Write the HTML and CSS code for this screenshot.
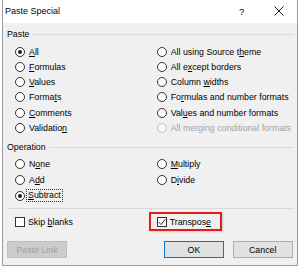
FILE: index.html
```html
<!DOCTYPE html>
<html>
<head>
<meta charset="utf-8">
<link rel="stylesheet" href="styles.css">
</head>
<body>
<div class="dialog">
  <div class="titlebar">
    <span class="title">Paste Special</span>
    <span class="help">?</span>
    <svg class="close" width="10" height="10" viewBox="0 0 10 10"><path d="M0.5 0.5L9.5 9.5M9.5 0.5L0.5 9.5" stroke="#1a1a1a" stroke-width="1" fill="none"/></svg>
  </div>
  <div class="content">
    <div class="group-head"><span>Paste</span><i class="rule"></i></div>
    <div class="grid paste">
      <label class="opt"><span class="radio on"></span><span><u>A</u>ll</span></label>
      <label class="opt"><span class="radio"></span><span>All using Source t<u>h</u>eme</span></label>
      <label class="opt"><span class="radio"></span><span><u>F</u>ormulas</span></label>
      <label class="opt"><span class="radio"></span><span>All e<u>x</u>cept borders</span></label>
      <label class="opt"><span class="radio"></span><span><u>V</u>alues</span></label>
      <label class="opt"><span class="radio"></span><span>Column <u>w</u>idths</span></label>
      <label class="opt"><span class="radio"></span><span>Forma<u>t</u>s</span></label>
      <label class="opt"><span class="radio"></span><span>Fo<u>r</u>mulas and number formats</span></label>
      <label class="opt"><span class="radio"></span><span><u>C</u>omments</span></label>
      <label class="opt"><span class="radio"></span><span>Val<u>u</u>es and number formats</span></label>
      <label class="opt"><span class="radio"></span><span>Validatio<u>n</u></span></label>
      <label class="opt disabled"><span class="radio"></span><span>All merging conditional formats</span></label>
    </div>
    <div class="group-head op"><span>Operation</span><i class="rule"></i></div>
    <div class="grid ops">
      <label class="opt"><span class="radio"></span><span>N<u>o</u>ne</span></label>
      <label class="opt"><span class="radio"></span><span><u>M</u>ultiply</span></label>
      <label class="opt"><span class="radio"></span><span>A<u>d</u>d</span></label>
      <label class="opt"><span class="radio"></span><span>D<u>i</u>vide</span></label>
      <label class="opt"><span class="radio on"></span><span class="focus"><u>S</u>ubtract</span></label>
    </div>
    <div class="sep"></div>
    <div class="grid checks">
      <label class="opt"><span class="check"></span><span>Skip <u>b</u>lanks</span></label>
      <label class="opt hl"><span class="check"><svg width="10" height="10" viewBox="0 0 10 10"><path d="M1.8 5.2L4 7.6L8.4 2" stroke="#333" stroke-width="1" fill="none"/></svg></span><span>Transpos<u>e</u></span></label>
    </div>
    <div class="buttons">
      <button class="btn disabled">Paste <u>L</u>ink</button>
      <div class="right">
        <button class="btn default">OK</button>
        <button class="btn">Cancel</button>
      </div>
    </div>
  </div>
</div>
</body>
</html>
```
FILE: styles.css
```css
html, body {
  margin: 0;
  padding: 0;
  background: #ffffff;
}
body {
  width: 300px;
  height: 268px;
  overflow: hidden;
  font-family: "Liberation Sans", Arial, sans-serif;
  font-size: 8.8px;
  color: #000;
}
.dialog {
  margin-left: 2px;
  width: 296px;
  height: 266px;
  box-sizing: border-box;
  border: 1px solid #9a9a9a;
  border-top: none;
  display: flex;
  flex-direction: column;
  background: #f0f0f0;
}
.titlebar {
  height: 23px;
  flex: none;
  background: #fff;
  display: flex;
  align-items: center;
  padding-left: 2px;
  padding-bottom: 1px;
  box-sizing: border-box;
}
.title {
  font-size: 9px;
  flex: 1;
}
.help {
  font-size: 9.5px;
  width: 8px;
  text-align: center;
  margin-right: 28.3px;
}
.close {
  margin-right: 13px;
}
.content {
  flex: 1;
  padding: 3px 3px 0 4px;
  display: flex;
  flex-direction: column;
}
.group-head {
  height: 15px;
  display: flex;
  align-items: center;
  flex: none;
}
.group-head .rule {
  flex: 1;
  height: 1px;
  background: #dadada;
  margin-left: 3px;
  margin-top: 1px;
}
.grid {
  display: grid;
  grid-template-columns: 141.7px 1fr;
  margin-left: 8px;
}
.paste {
  margin-top: 3.1px;
  grid-auto-rows: 15.25px;
}
.op {
  margin-top: 4.2px;
}
.ops {
  margin-top: 1.65px;
  grid-auto-rows: 15.7px;
}
.opt {
  display: flex;
  align-items: center;
  white-space: nowrap;
}
.radio {
  width: 10px;
  height: 10px;
  box-sizing: border-box;
  border: 1px solid #333;
  border-radius: 50%;
  background: #fff;
  margin-right: 4px;
  display: flex;
  align-items: center;
  justify-content: center;
  flex: none;
}
.radio.on::after {
  content: "";
  width: 4px;
  height: 4px;
  border-radius: 50%;
  background: #1a1a1a;
}
.disabled .radio {
  border-color: #c2c2c2;
  background: #f5f5f5;
}
.opt.disabled {
  color: #a3a3a3;
}
u {
  text-decoration-thickness: 1px;
  text-underline-offset: 1px;
}
.focus {
  outline: 1px dotted #333;
  outline-offset: 0;
  padding: 0 1px 0 1px;
  margin-left: -2px;
  line-height: 11px;
}
.sep {
  height: 1px;
  background: #dadada;
  margin-top: 4.7px;
  margin-left: 0;
}
.checks {
  margin-top: 4.4px;
  grid-auto-rows: 16px;
}
.check {
  width: 10px;
  height: 10px;
  box-sizing: border-box;
  border: 1px solid #333;
  background: #fff;
  margin-right: 3px;
  flex: none;
  display: flex;
}
.check svg {
  margin: -1px;
}
.hl {
  position: relative;
  justify-self: start;
}
.hl::after {
  content: "";
  position: absolute;
  left: -8px;
  top: -2px;
  width: 73.4px;
  height: 19.3px;
  box-sizing: border-box;
  border: 2px solid #e21b1b;
  box-shadow: 1px 1px 2px rgba(0,0,0,0.15);
}
.buttons {
  margin-top: 11.3px;
  display: flex;
  justify-content: space-between;
  padding-right: 1.3px;
}
.right {
  display: flex;
  gap: 9px;
}
.btn {
  width: 60px;
  height: 17.5px;
  box-sizing: border-box;
  border: 1px solid #adadad;
  background: #e1e1e1;
  font-family: inherit;
  font-size: 8.8px;
  color: #000;
  padding: 0;
  margin: 0;
}
.btn.default {
  border-color: #0078d7;
  width: 59.5px;
}
.btn.disabled {
  background: #cccccc;
  border-color: #bfbfbf;
  color: #a0a0a0;
}
.btn.disabled u {
  text-decoration: none;
}
```
